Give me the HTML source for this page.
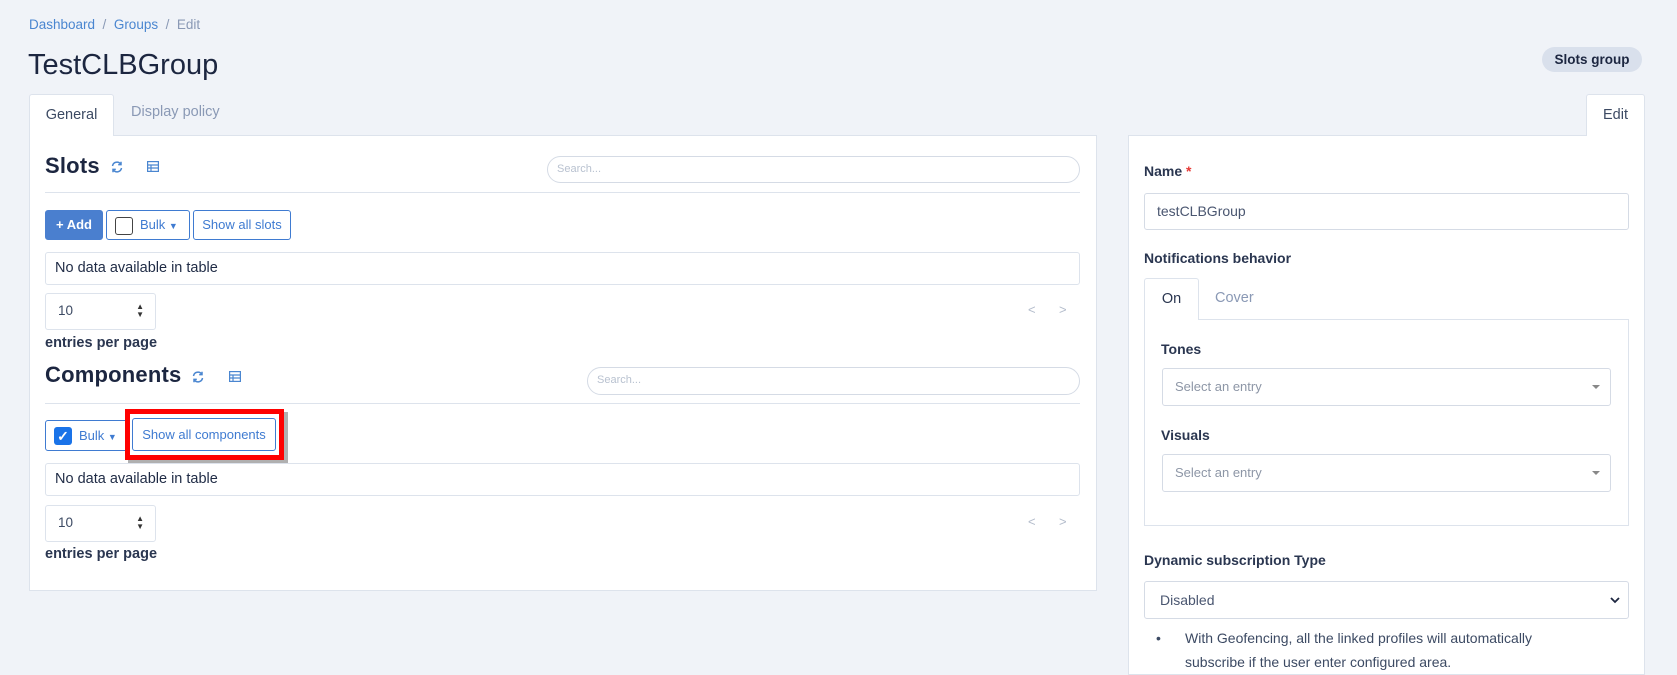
<!DOCTYPE html>
<html><head><meta charset="utf-8"><style>
*{box-sizing:border-box;margin:0;padding:0}
body{width:1677px;height:668px;overflow:hidden;background:#f0f3f8;font-family:"Liberation Sans",sans-serif;color:#1f2b45;position:relative;font-size:14px}
.a{position:absolute}
.bc{left:29px;top:17px;font-size:13.5px;color:#4a86d0}
.bc span{color:#8a99b5}
.title{left:28px;top:49px;font-size:29px;color:#1c2640}
.badge{left:1542px;top:47px;width:100px;height:25px;border-radius:13px;background:#d9e0ec;font-weight:bold;font-size:13.5px;text-align:center;line-height:25px;color:#1c2640}
.tab{background:#fff;border:1px solid #dde3ec;border-bottom:none;border-radius:3px 3px 0 0;text-align:center;font-size:14.5px;color:#3c4a63}
.card{background:#fff;border:1px solid #dde3ec}
h2{position:absolute;font-size:22px;font-weight:bold;color:#1c2640;letter-spacing:0.2px}
.search{border:1px solid #d5dbe5;border-radius:14px;font-size:11px;color:#b9c2d0;padding-left:9px;line-height:25px}
.hr{height:1px;background:#dde3ec}
.btn{border:1px solid #3f7bd1;border-radius:3px;color:#3f7bd1;font-size:13px;line-height:28px;text-align:center;background:#fff}
.row{border:1px solid #dde3ec;border-radius:3px;font-size:14.5px;padding-left:9px;line-height:31px;color:#1f2b45}
.sel{border:1px solid #dde3ec;border-radius:3px;font-size:13.5px;padding-left:12px;line-height:34px;color:#3c4a63}
.lbl{font-size:14px;font-weight:bold;color:#2a3650}
.inp{border:1px solid #d5dbe5;border-radius:3px;font-size:14px;color:#4a5670;padding-left:12px}
.ph{border:1px solid #d5dbe5;border-radius:3px;font-size:13px;color:#8d96a6;padding-left:12px}
.caret{position:absolute;right:10px;top:50%;margin-top:-2px;border-left:4px solid transparent;border-right:4px solid transparent;border-top:4px solid #888}
.pg{color:#b3bccb;font-size:13px}
</style></head><body>
<div class="a bc">Dashboard &nbsp;<span>/</span>&nbsp; Groups &nbsp;<span>/</span>&nbsp; <span>Edit</span></div>
<div class="a title">TestCLBGroup</div>
<div class="a badge">Slots group</div>

<div class="a card" style="left:29px;top:135px;width:1068px;height:456px"></div>
<div class="a tab" style="left:29px;top:94px;width:85px;height:42px;line-height:40px">General</div>
<div class="a" style="left:131px;top:104px;font-size:14.5px;color:#8a99b5">Display policy</div>

<h2 style="left:45px;top:153px">Slots</h2>
<svg class="a" style="left:110px;top:160px" width="14" height="14" viewBox="0 0 14 14" fill="none" stroke="#4a86d0" stroke-width="1.5"><path d="M2.5 6a4.5 4.5 0 0 1 8.2-1.8M11.5 8a4.5 4.5 0 0 1-8.2 1.8"/><path d="M11 1.8v2.8H8.2M3 12.2V9.4h2.8"/></svg>
<svg class="a" style="left:147px;top:161px" width="12" height="11" viewBox="0 0 12 11" fill="none" stroke="#4a86d0" stroke-width="1.2"><rect x="0.6" y="0.6" width="10.8" height="9.8"/><path d="M0.6 4h10.8M0.6 7h10.8M4 4v6.4"/></svg>
<div class="a search" style="left:547px;top:156px;width:533px;height:27px">Search...</div>
<div class="a hr" style="left:45px;top:192px;width:1035px"></div>
<div class="a btn" style="left:45px;top:210px;width:58px;height:30px;background:#4a7fcf;color:#fff;font-weight:bold;border-color:#4a7fcf">+ Add</div>
<div class="a btn" style="left:106px;top:210px;width:84px;height:30px;text-align:left;padding-left:33px">Bulk <span style="font-size:9px">▼</span></div>
<div class="a" style="left:115px;top:217px;width:18px;height:18px;border:1px solid #444;border-radius:3px"></div>
<div class="a btn" style="left:193px;top:210px;width:98px;height:30px">Show all slots</div>
<div class="a row" style="left:45px;top:252px;width:1035px;height:33px">No data available in table</div>
<div class="a sel" style="left:45px;top:293px;width:111px;height:37px">10</div>
<div class="a" style="left:45px;top:293px;width:111px;height:37px"><span style="position:absolute;right:12px;top:10px;font-size:8px;line-height:8px;color:#333">▲<br>▼</span></div>
<div class="a pg" style="left:1028px;top:302px">&lt;</div><div class="a pg" style="left:1059px;top:302px">&gt;</div>
<div class="a" style="left:45px;top:335px;font-size:14.5px;font-weight:bold;color:#2a3650">entries per page</div>

<h2 style="left:45px;top:362px">Components</h2>
<svg class="a" style="left:191px;top:370px" width="14" height="14" viewBox="0 0 14 14" fill="none" stroke="#4a86d0" stroke-width="1.5"><path d="M2.5 6a4.5 4.5 0 0 1 8.2-1.8M11.5 8a4.5 4.5 0 0 1-8.2 1.8"/><path d="M11 1.8v2.8H8.2M3 12.2V9.4h2.8"/></svg>
<svg class="a" style="left:229px;top:371px" width="12" height="11" viewBox="0 0 12 11" fill="none" stroke="#4a86d0" stroke-width="1.2"><rect x="0.6" y="0.6" width="10.8" height="9.8"/><path d="M0.6 4h10.8M0.6 7h10.8M4 4v6.4"/></svg>
<div class="a search" style="left:587px;top:367px;width:493px;height:28px">Search...</div>
<div class="a hr" style="left:45px;top:403px;width:1035px"></div>
<div class="a btn" style="left:45px;top:420px;width:84px;height:31px;text-align:left;padding-left:33px;line-height:29px">Bulk <span style="font-size:9px">▼</span></div>
<div class="a" style="left:54px;top:427px;width:18px;height:18px;background:#1a73e8;border-radius:3px;color:#fff;font-size:14px;line-height:18px;text-align:center;font-weight:bold">✓</div>
<div class="a" style="left:128px;top:412px;width:160px;height:52px;background:#b0b0b0"></div>
<div class="a" style="left:125px;top:409px;width:159px;height:51px;border:5px solid #ff0000;background:#ccc"></div>
<div class="a" style="left:130px;top:414px;width:149px;height:41px;background:#fff"></div>
<div class="a btn" style="left:132px;top:418px;width:144px;height:33px;line-height:31px">Show all components</div>
<div class="a row" style="left:45px;top:463px;width:1035px;height:33px">No data available in table</div>
<div class="a sel" style="left:45px;top:505px;width:111px;height:37px">10</div>
<div class="a" style="left:45px;top:505px;width:111px;height:37px"><span style="position:absolute;right:12px;top:10px;font-size:8px;line-height:8px;color:#333">▲<br>▼</span></div>
<div class="a pg" style="left:1028px;top:514px">&lt;</div><div class="a pg" style="left:1059px;top:514px">&gt;</div>
<div class="a" style="left:45px;top:546px;font-size:14.5px;font-weight:bold;color:#2a3650">entries per page</div>

<div class="a card" style="left:1128px;top:135px;width:517px;height:540px"></div>
<div class="a tab" style="left:1586px;top:94px;width:59px;height:42px;line-height:40px">Edit</div>
<div class="a lbl" style="left:1144px;top:163px">Name <span style="color:#e53935">*</span></div>
<div class="a inp" style="left:1144px;top:193px;width:485px;height:37px;line-height:35px">testCLBGroup</div>
<div class="a lbl" style="left:1144px;top:250px">Notifications behavior</div>
<div class="a" style="left:1144px;top:319px;width:485px;height:207px;border:1px solid #dde3ec"></div>
<div class="a tab" style="left:1144px;top:278px;width:55px;height:42px;line-height:40px;color:#2a3650">On</div>
<div class="a" style="left:1215px;top:290px;font-size:14.5px;color:#8a99b5">Cover</div>
<div class="a lbl" style="left:1161px;top:341px">Tones</div>
<div class="a ph" style="left:1162px;top:368px;width:449px;height:38px;line-height:36px">Select an entry<span class="caret"></span></div>
<div class="a lbl" style="left:1161px;top:427px">Visuals</div>
<div class="a ph" style="left:1162px;top:454px;width:449px;height:38px;line-height:36px">Select an entry<span class="caret"></span></div>
<div class="a lbl" style="left:1144px;top:552px">Dynamic subscription Type</div>
<div class="a inp" style="left:1144px;top:581px;width:485px;height:38px;line-height:36px;padding-left:15px">Disabled<svg style="position:absolute;right:8px;top:15px" width="10" height="7" viewBox="0 0 10 7"><path d="M1 1l4 4 4-4" stroke="#1c2640" stroke-width="1.8" fill="none"/></svg></div>
<div class="a" style="left:1156px;top:626px;font-size:14px;line-height:24px;color:#3c4a63;width:420px"><span style="position:absolute;left:0;top:0">•</span><div style="padding-left:29px">With Geofencing, all the linked profiles will automatically subscribe if the user enter configured area.</div></div>
</body></html>
